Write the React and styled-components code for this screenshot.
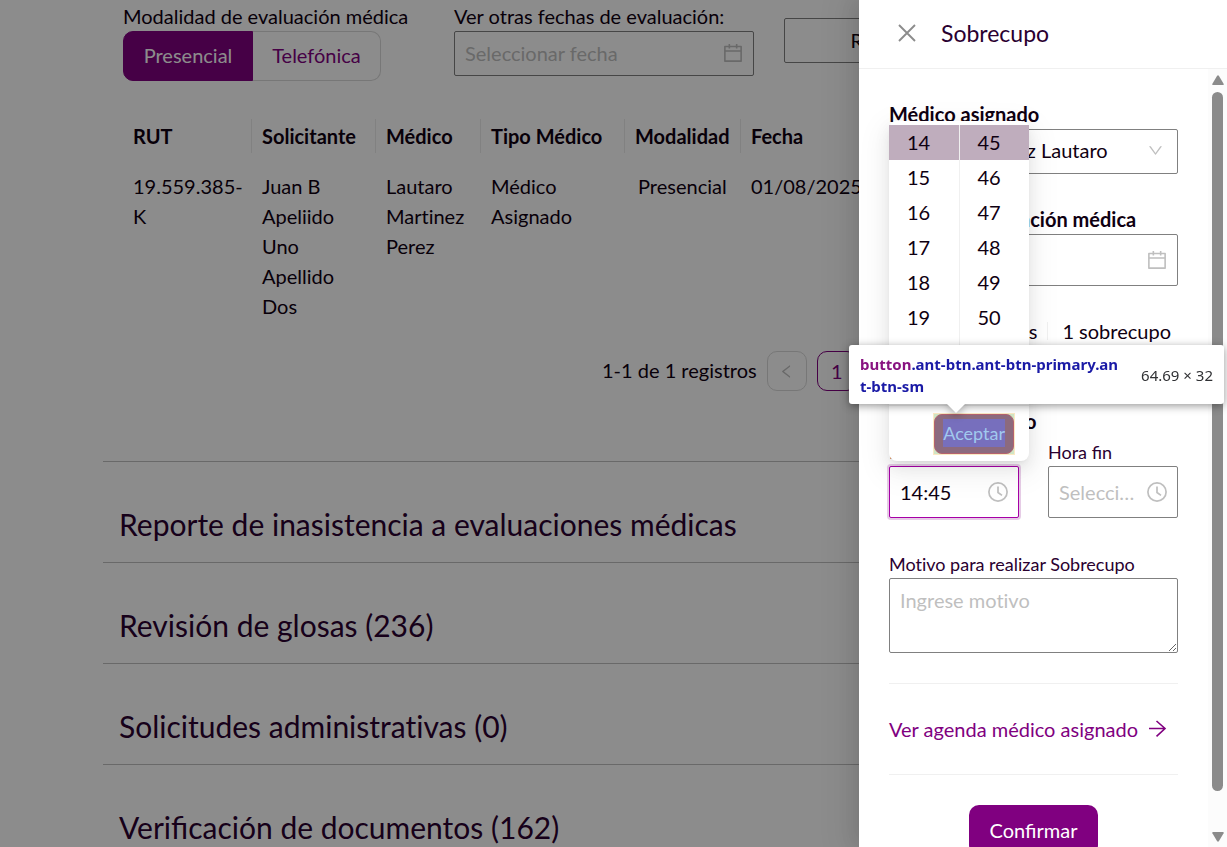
import React from "react";
import styled, { createGlobalStyle } from "styled-components";

const Global = createGlobalStyle`
  * { box-sizing: border-box; }
  html, body, #root { height: 100%; margin: 0; }
  body {
    overflow: hidden;
    background: #fff;
    color: #0f0011;
    font: 20px/30px Lato, "Liberation Sans", sans-serif;
    font-variant-ligatures: none;
  }
  button, input, select, textarea {
    font: inherit;
    color: inherit;
    font-variant-ligatures: inherit;
  }
`;

const Screen = styled.div`
  position: relative;
  height: 100%;
  overflow: hidden;
`;
const Page = styled.main`
  padding: 2px 24px 0 103px;
`;
const Section = styled.section`
  height: 459px;
  padding: 0 20px;
`;
const Filters = styled.div`
  display: flex;
  align-items: flex-start;
`;
const Field = styled.div`
  display: flex;
  flex: none;
  flex-direction: column;
  width: ${(p) => p.$width};
  margin-right: ${(p) => p.$gap};
`;
const FilterLabel = styled.label`
  line-height: 29px;
  white-space: nowrap;
`;
const Segmented = styled.div`
  display: flex;
`;
const Segment = styled.button`
  width: ${(p) => (p.$active ? "130px" : "128px")};
  height: 50px;
  padding: 0 0 2px;
  border: 1px solid ${(p) => (p.$active ? "#800080" : "#d9d9d9")};
  border-left-width: ${(p) => (p.$active ? "1px" : "0")};
  border-radius: ${(p) => (p.$active ? "10px 0 0 10px" : "0 10px 10px 0")};
  background: ${(p) => (p.$active ? "#800080" : "#fff")};
  color: ${(p) => (p.$active ? "#fff" : "#800080")};
`;
const Box = styled.div`
  display: flex;
  align-items: center;
  gap: 10px;
  width: 100%;
  height: ${(p) => (p.$tall ? "52px" : "45px")};
  padding: ${(p) => (p.$tall ? "0" : "0 0 2px")};
  padding-inline: ${(p) => (p.$select ? "14px" : "10px")};
  border: 1px solid ${(p) => (p.$focus ? "#a600a6" : "#808080")};
  border-radius: 2px;
  background: #fff;
  box-shadow: ${(p) => (p.$focus ? "0 0 0 2px rgba(128, 0, 128, 0.2)" : "none")};
  svg { flex: none; }
`;
const TextInput = styled.input`
  flex: 1;
  min-width: 0;
  padding: 0;
  border: 0;
  outline: 0;
  background: transparent;
  text-overflow: ellipsis;
  &::placeholder { color: #bfbfbf; opacity: 1; }
`;
const OutlineButton = styled.button`
  flex: none;
  width: 226px;
  height: 45px;
  margin-top: 16px;
  padding: 0 0 2px;
  border: 1px solid #808080;
  border-radius: 2px;
  background: #fff;
`;
const Table = styled.table`
  width: 880px;
  margin-top: 38px;
  table-layout: fixed;
  border-collapse: collapse;
  text-align: left;
`;
const HeadCell = styled.th`
  width: ${(p) => p.$width};
  padding: 0;
  font-weight: 700;
  span {
    display: block;
    height: 34px;
    padding-left: 10px;
    border-right: 1px solid #ebebeb;
    line-height: 34px;
  }
`;
const Cell = styled.td`
  padding: 18px 8px 0 ${(p) => (p.$inset ? "13px" : "10px")};
  vertical-align: top;
`;
const Pager = styled.nav`
  display: flex;
  align-items: center;
  gap: 10px;
  margin: 30px 0 0 479px;
`;
const PagerTotal = styled.span`
  padding-bottom: 3px;
`;
const PagerButton = styled.button`
  display: flex;
  align-items: center;
  justify-content: center;
  width: 40px;
  height: 40px;
  padding: 0;
  border: 1px solid ${(p) => (p.$active ? "#800080" : "#d9d9d9")};
  border-radius: 10px;
  background: #fff;
  color: ${(p) => (p.$active ? "#800080" : "#bfbfbf")};
`;
const Panel = styled.h2`
  height: 101px;
  margin: 0;
  padding: 41px 16px 0;
  border-top: 1px solid #bfbfbf;
  color: #2a0030;
  font-size: 30px;
  font-weight: 400;
  font-variant-ligatures: ${(p) => (p.$ligatures ? "normal" : "none")};
  line-height: 42px;
`;

const Mask = styled.div`
  position: absolute;
  inset: 0;
  background: rgba(0, 0, 0, 0.45);
`;
const Drawer = styled.aside`
  position: absolute;
  inset: 0 0 0 auto;
  display: flex;
  flex-direction: column;
  width: 368px;
  background: #fff;
  box-shadow: -6px 0 16px rgba(0, 0, 0, 0.08), -9px 0 28px 8px rgba(0, 0, 0, 0.05);
`;
const DrawerHead = styled.header`
  display: flex;
  flex: none;
  align-items: center;
  gap: 24px;
  height: 69px;
  padding: 0 38px 2px;
  border-bottom: 1px solid #f0f0f0;
`;
const IconButton = styled.button`
  display: flex;
  padding: 0;
  border: 0;
  background: none;
  color: #8c8c8c;
`;
const DrawerTitle = styled.h1`
  margin: 0;
  color: #2a0030;
  font-size: 23px;
  font-weight: 400;
  line-height: 30px;
`;
const DrawerBody = styled.div`
  display: flex;
  flex: 1;
  min-height: 0;
`;
const Form = styled.form`
  flex: 1;
  min-width: 0;
  padding: 30px 30px 0;
  overflow: hidden;
`;
const FormLabel = styled.label`
  display: block;
  height: 30px;
  font-weight: 700;
`;
const SmallLabel = styled.label`
  display: block;
  height: 30px;
  color: #2a0030;
  font-size: 18px;
  font-variant-ligatures: ${(p) => (p.$ligatures ? "normal" : "none")};
  line-height: 32px;
`;
const Group = styled.div`
  position: relative;
  margin-bottom: 30px;
`;
const Select = styled.select`
  flex: 1;
  min-width: 0;
  padding: 0 0 2px;
  border: 0;
  outline: 0;
  appearance: none;
  background: transparent;
`;
const Counts = styled.div`
  display: flex;
  align-items: center;
  justify-content: flex-end;
  height: 30px;
  margin-bottom: 60px;
  padding-right: 7px;
  white-space: nowrap;
`;
const Bar = styled.span`
  width: 1px;
  height: 18px;
  margin: 0 14px 0 10px;
  background: #f0f0f0;
`;
const Times = styled.div`
  display: grid;
  grid-template-columns: repeat(2, minmax(0, 1fr));
  gap: 29px;
`;
const TextArea = styled.textarea`
  display: block;
  width: 100%;
  height: 75px;
  padding: 6px 10px;
  border: 1px solid #808080;
  border-radius: 2px;
  outline: 0;
  resize: vertical;
  &::placeholder { color: #bfbfbf; opacity: 1; }
`;
const Rule = styled.hr`
  height: 1px;
  margin: 0;
  border: 0;
  background: #f0f0f0;
`;
const AgendaLink = styled.a`
  display: flex;
  align-items: center;
  gap: 10px;
  height: 90px;
  color: #800080;
  text-decoration: none;
  white-space: nowrap;
`;
const Primary = styled.button`
  display: block;
  width: 129px;
  height: 50px;
  margin: 30px auto;
  padding: 0;
  border: 0;
  border-radius: 10px;
  background: #800080;
  color: #fff;
  font-variant-ligatures: normal;
`;
const ScrollTrack = styled.div`
  display: flex;
  flex-direction: column;
  align-items: center;
  width: 19px;
  padding: 6px 0 5px;
  background: #fcfcfc;
`;
const Thumb = styled.div`
  flex: 1;
  width: 11px;
  margin: 7px 0 41px;
  border-radius: 6px;
  background: #8b8b8b;
`;

const Picker = styled.div`
  position: absolute;
  bottom: 57px;
  left: 0;
  z-index: 1;
  display: flex;
  flex-direction: column;
  width: 140px;
  height: 340px;
  padding-top: 4px;
  border-radius: 8px;
  background: #fff;
  box-shadow: 0 6px 16px rgba(0, 0, 0, 0.08), 0 3px 6px -4px rgba(0, 0, 0, 0.12),
    0 9px 28px 8px rgba(0, 0, 0, 0.05);
`;
const Columns = styled.div`
  display: flex;
  height: 280px;
`;
const Column = styled.ul`
  flex: 1;
  margin: 0;
  padding: 0;
  overflow: hidden;
  list-style: none;
  & + & { border-left: 1px solid #f0f0f0; }
`;
const Option = styled.li`
  height: 35px;
  padding-left: 18px;
  background: ${(p) => (p.$selected ? "#bfadbd" : "transparent")};
  line-height: 34px;
`;
const PickerFoot = styled.div`
  display: flex;
  flex: 1;
  align-items: flex-start;
  justify-content: flex-end;
  padding: 7px 14px 0 0;
  border-top: 1px solid #f0f0f0;
`;
const Highlight = styled.div`
  padding: 1px;
  background: linear-gradient(#cfe5c5, #cfe5c5) content-box, #fbe9c4;
`;
const Accept = styled.button`
  display: block;
  height: 40px;
  padding: 4px 8px 6px;
  border: 1px solid #b5626d;
  border-radius: 8px;
  background: #8c6a7e;
  color: #a1c9ee;
  font-size: 18px;
  line-height: 28px;
  span { display: block; background: #776fbd; }
`;

const Inspector = styled.div`
  position: absolute;
  top: 345px;
  right: 3px;
  z-index: 2;
  display: flex;
  align-items: center;
  justify-content: space-between;
  width: 375px;
  height: 59px;
  padding: 0 11px;
  border-radius: 3px;
  background: #fff;
  color: #303134;
  font: 15px/22px "Noto Sans", sans-serif;
  white-space: nowrap;
  filter: drop-shadow(0 2px 4px rgba(0, 0, 0, 0.4));
  &::after {
    content: "";
    position: absolute;
    top: 100%;
    left: 98px;
    border: 9px solid transparent;
    border-top-color: #fff;
    border-bottom: 0;
  }
`;
const Selector = styled.div`
  color: #1a1aa6;
  font-weight: 700;
  span { color: #881280; }
`;

const antPath = {
  calendar:
    "M880 184H712v-64c0-4.400-3.600-8-8-8h-56c-4.400 0-8 3.600-8 8v64H384v-64c0-4.400-3.600-8-8-8h-56c-4.400 0-8 3.600-8 8v64H144c-17.700 0-32 14.300-32 32v664c0 17.700 14.300 32 32 32h736c17.700 0 32-14.300 32-32V216c0-17.700-14.300-32-32-32zm-40 656H184V460h656v380zM184 392V256h128v48c0 4.400 3.600 8 8 8h56c4.400 0 8-3.600 8-8v-48h256v48c0 4.400 3.600 8 8 8h56c4.400 0 8-3.600 8-8v-48h128v136H184z",
  down:
    "M884 256h-75c-5.100 0-9.900 2.500-12.900 6.600L512 654.200 227.900 262.600c-3-4.100-7.800-6.600-12.900-6.600h-75c-6.500 0-10.300 7.400-6.500 12.700l352.600 486.100c12.800 17.600 39 17.600 51.700 0l352.600-486.100c3.900-5.300.1-12.700-6.400-12.700z",
  left:
    "M724 218.300V141c0-6.700-7.700-10.400-12.900-6.300L260.300 486.800a31.860 31.860 0 0 0 0 50.300l450.800 352.100c5.300 4.100 12.900.4 12.900-6.300v-77.300c0-4.900-2.300-9.600-6.100-12.600l-360-281 360-281.100c3.800-3 6.100-7.700 6.100-12.600z",
};
const AntIcon = ({ name, size }) => (
  <svg width={size} height={size} viewBox="64 64 896 896" fill="currentColor" aria-hidden="true">
    <path d={antPath[name]} />
  </svg>
);
const Muted = styled.span`
  display: flex;
  color: #bfbfbf;
`;
const Calendar = () => (
  <Muted>
    <AntIcon name="calendar" size={20} />
  </Muted>
);
const Clock = () => (
  <Muted>
    <svg width="20" height="20" viewBox="0 0 20 20" fill="none" stroke="currentColor" strokeWidth="1.7" aria-hidden="true">
      <circle cx="10" cy="10" r="9.100" />
      <path d="M10 4.500v6l4 2.900" />
    </svg>
  </Muted>
);
const Cross = () => (
  <svg width="20" height="20" viewBox="0 0 20 20" fill="none" stroke="currentColor" strokeWidth="1.900" aria-hidden="true">
    <path d="M2 2l16 16M18 2L2 18" />
  </svg>
);
const Arrow = () => (
  <svg width="20" height="20" viewBox="0 0 20 20" fill="none" stroke="currentColor" strokeWidth="1.600" aria-hidden="true">
    <path d="M1 9.500h16M8.500 2L17 9.500 8.500 17.300" />
  </svg>
);
const Triangle = ({ down }) => (
  <svg width="12" height="10" viewBox="0 0 12 10" fill="#8b8b8b" aria-hidden="true">
    <path d={down ? "M1 0h10q1 0 .6 1.200L7 9q-1 1.400-2 0L.4 1.200Q0 0 1 0z" : "M1 10h10q1 0 .6-1.200L7 1Q6-.4 5 1L.4 8.800Q0 10 1 10z"} />
  </svg>
);

const columns = [
  ["RUT", "129px"],
  ["Solicitante", "124px"],
  ["Médico", "105px"],
  ["Tipo Médico", "144px"],
  ["Modalidad", "116px"],
  ["Fecha", "262px"],
];
const record = ["19.559.385-K", "Juan B Apeliido Uno Apellido Dos", "Lautaro Martinez Perez", "Médico Asignado", "Presencial", "01/08/2025"];
const panels = [
  { title: "Reporte de inasistencia a evaluaciones médicas" },
  { title: "Revisión de glosas (236)" },
  { title: "Solicitudes administrativas (0)" },
  { title: "Verificación de documentos (162)", ligatures: true },
];
const hours = [14, 15, 16, 17, 18, 19];
const minutes = [45, 46, 47, 48, 49, 50];

export default function App() {
  return (
    <Screen>
      <Global />
      <Page>
        <Section>
          <Filters>
            <Field $width="301px" $gap="30px">
              <FilterLabel as="span">Modalidad de evaluación médica</FilterLabel>
              <Segmented>
                <Segment $active>Presencial</Segment>
                <Segment>Telefónica</Segment>
              </Segmented>
            </Field>
            <Field $width="300px" $gap="30px">
              <FilterLabel htmlFor="fecha">Ver otras fechas de evaluación:</FilterLabel>
              <Box>
                <TextInput id="fecha" placeholder="Seleccionar fecha" />
                <Calendar />
              </Box>
            </Field>
            <OutlineButton>Reagendar</OutlineButton>
          </Filters>
          <Table>
            <thead>
              <tr>
                {columns.map(([name, width]) => (
                  <HeadCell key={name} $width={width}>
                    <span>{name}</span>
                  </HeadCell>
                ))}
              </tr>
            </thead>
            <tbody>
              <tr>
                {record.map((value, i) => (
                  <Cell key={value} $inset={i === 4}>{value}</Cell>
                ))}
              </tr>
            </tbody>
          </Table>
          <Pager>
            <PagerTotal>1-1 de 1 registros</PagerTotal>
            <PagerButton aria-label="Anterior">
              <AntIcon name="left" size={15} />
            </PagerButton>
            <PagerButton $active>1</PagerButton>
          </Pager>
        </Section>
        {panels.map(({ title, ligatures }) => (
          <Panel key={title} $ligatures={ligatures}>{title}</Panel>
        ))}
      </Page>
      <Mask />
      <Drawer>
        <DrawerHead>
          <IconButton aria-label="Cerrar">
            <Cross />
          </IconButton>
          <DrawerTitle>Sobrecupo</DrawerTitle>
        </DrawerHead>
        <DrawerBody>
          <Form>
            <Group>
              <FormLabel htmlFor="medico">Médico asignado</FormLabel>
              <Box $select>
                <Select id="medico">
                  <option>Martinez Perez Lautaro</option>
                </Select>
                <Muted>
                  <AntIcon name="down" size={15} />
                </Muted>
              </Box>
            </Group>
            <Group>
              <FormLabel htmlFor="evaluacion">Fecha de evaluación médica</FormLabel>
              <Box $tall>
                <TextInput id="evaluacion" defaultValue="01/08/2025" />
                <Calendar />
              </Box>
            </Group>
            <Counts>
              <span>0 reservas</span>
              <Bar />
              <span>1 sobrecupo</span>
            </Counts>
            <Group>
              <FormLabel as="div">Horario deseado</FormLabel>
              <Times>
                <div>
                  <SmallLabel htmlFor="inicio">Hora inicio</SmallLabel>
                  <Box $tall $focus>
                    <TextInput id="inicio" defaultValue="14:45" />
                    <Clock />
                  </Box>
                </div>
                <div>
                  <SmallLabel htmlFor="fin" $ligatures>Hora fin</SmallLabel>
                  <Box $tall>
                    <TextInput id="fin" placeholder="Seleccionar" />
                    <Clock />
                  </Box>
                </div>
              </Times>
              <Picker>
                <Columns>
                  {[hours, minutes].map((values) => (
                    <Column key={values[0]}>
                      {values.map((value, i) => (
                        <Option key={value} $selected={i === 0}>{value}</Option>
                      ))}
                    </Column>
                  ))}
                </Columns>
                <PickerFoot>
                  <Highlight>
                    <Accept type="button">
                      <span>Aceptar</span>
                    </Accept>
                  </Highlight>
                </PickerFoot>
              </Picker>
            </Group>
            <Group>
              <SmallLabel htmlFor="motivo">Motivo para realizar Sobrecupo</SmallLabel>
              <TextArea id="motivo" placeholder="Ingrese motivo" />
            </Group>
            <Rule />
            <AgendaLink href="#agenda">
              Ver agenda médico asignado
              <Arrow />
            </AgendaLink>
            <Rule />
            <Primary type="button">Confirmar</Primary>
          </Form>
          <ScrollTrack>
            <Triangle />
            <Thumb />
            <Triangle down />
          </ScrollTrack>
        </DrawerBody>
      </Drawer>
      <Inspector>
        <Selector>
          <span>button</span>.ant-btn.ant-btn-primary.an
          <br />
          t-btn-sm
        </Selector>
        64.69 × 32
      </Inspector>
    </Screen>
  );
}
